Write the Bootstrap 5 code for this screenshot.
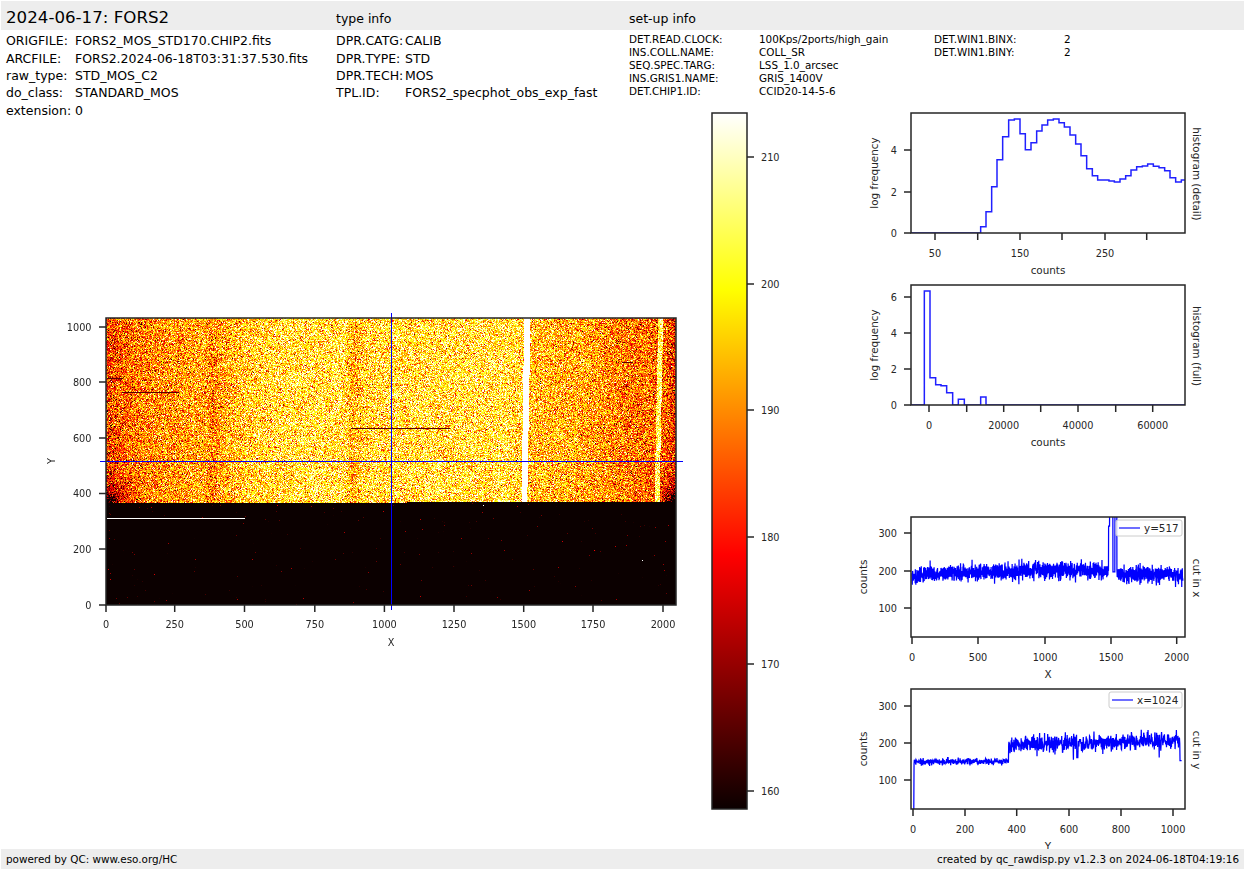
<!DOCTYPE html>
<html lang="en">
<head>
  <meta charset="UTF-8" />
  <title>2024-06-17: FORS2</title>
  <link href="https://cdn.jsdelivr.net/npm/bootstrap@5.3.3/dist/css/bootstrap.min.css" rel="stylesheet">
  <style>
    body {
      background: #fff;
      color: #000;
      font-family: "DejaVu Sans", sans-serif;
      font-size: 12.5px;
      overflow: hidden;
    }
    .bar { background: #ededed; margin: 1px 1px 0; height: 29px; padding-top: 4px; }
    .bar .title { font-size: 16.67px; width: 335px; padding-left: 5px; margin-top: -1px; }
    .bar .mid { width: 293px; padding-top: 3px; }
    .bar .last { padding-top: 3px; }
    .cell-a { width: 336px; padding-left: 6px; }
    .cell-b { width: 293px; }
    .cell-c { width: 305px; }
    .info { height: 78px; padding-top: 2.4px; line-height: 17.3px; }
    .info span { white-space: nowrap; }
    .lab-a { display: inline-block; width: 69px; }
    .small-rows { font-size: 10.4px; line-height: 13px; padding-top: 1px; }
    .lab-c { display: inline-block; width: 130px; }
    .img-plot { width: 700px; height: 380px; }
    .img-plot canvas { left: 106px; top: 47px; }
    .img-plot svg { position: relative; display: block; }
    .cbar { display: block; }
    .main { height: 741px; }
    .gap-cut { margin-top: 60px; }
    .plot { height: 172px; }
    .plot svg { display: block; overflow: visible; }
    .plot-last { height: 165px; }
    .foot { background: #ededed; margin: 0 1px; height: 20px; padding: 2px 5px 0; font-size: 10.4px; }
    svg text { font-family: "DejaVu Sans", sans-serif; font-size: 9.72px; fill: #262626; }
    svg text.lab { font-size: 10.4px; }
  </style>
</head>
<body>

<!-- header -->
<div class="bar d-flex align-items-center">
  <div class="title">2024-06-17: FORS2</div>
  <div class="mid">type info</div>
  <div class="last">set-up info</div>
</div>

<div class="info d-flex">
  <div class="cell-a">
    <div><span class="lab-a">ORIGFILE:</span><span>FORS2_MOS_STD170.CHIP2.fits</span></div>
    <div><span class="lab-a">ARCFILE:</span><span>FORS2.2024-06-18T03:31:37.530.fits</span></div>
    <div><span class="lab-a">raw_type:</span><span>STD_MOS_C2</span></div>
    <div><span class="lab-a">do_class:</span><span>STANDARD_MOS</span></div>
    <div><span class="lab-a">extension:</span><span>0</span></div>
  </div>
  <div class="cell-b">
    <div><span class="lab-a">DPR.CATG:</span><span>CALIB</span></div>
    <div><span class="lab-a">DPR.TYPE:</span><span>STD</span></div>
    <div><span class="lab-a">DPR.TECH:</span><span>MOS</span></div>
    <div><span class="lab-a">TPL.ID:</span><span>FORS2_specphot_obs_exp_fast</span></div>
  </div>
  <div class="cell-c small-rows">
    <div><span class="lab-c">DET.READ.CLOCK:</span><span>100Kps/2ports/high_gain</span></div>
    <div><span class="lab-c">INS.COLL.NAME:</span><span>COLL_SR</span></div>
    <div><span class="lab-c">SEQ.SPEC.TARG:</span><span>LSS_1.0_arcsec</span></div>
    <div><span class="lab-c">INS.GRIS1.NAME:</span><span>GRIS_1400V</span></div>
    <div><span class="lab-c">DET.CHIP1.ID:</span><span>CCID20-14-5-6</span></div>
  </div>
  <div class="small-rows">
    <div><span class="lab-c">DET.WIN1.BINX:</span><span>2</span></div>
    <div><span class="lab-c">DET.WIN1.BINY:</span><span>2</span></div>
  </div>
</div>

<!-- plots -->
<div class="main d-flex align-items-start">
  <div class="d-flex align-items-center">
    <div class="img-plot position-relative">
      <canvas id="frame" class="position-absolute" width="570" height="287"></canvas>
      <svg id="imgAxes" width="700" height="380"></svg>
    </div>
    <svg class="cbar" width="150" height="706">
      <defs>
        <linearGradient id="hot" x1="0" y1="1" x2="0" y2="0">
          <stop offset="0" stop-color="#0b0000"/>
          <stop offset="0.365" stop-color="#ff0000"/>
          <stop offset="0.746" stop-color="#ffff00"/>
          <stop offset="1" stop-color="#ffffff"/>
        </linearGradient>
      </defs>
      <rect x="12" y="5" width="35" height="696" fill="url(#hot)" stroke="#262626" stroke-width="1.5"/>
      <g stroke="#262626" stroke-width="1.5">
        <line x1="47" x2="54" y1="49" y2="49"/>
        <line x1="47" x2="54" y1="176" y2="176"/>
        <line x1="47" x2="54" y1="302" y2="302"/>
        <line x1="47" x2="54" y1="429" y2="429"/>
        <line x1="47" x2="54" y1="556" y2="556"/>
        <line x1="47" x2="54" y1="683" y2="683"/>
      </g>
      <text x="61" y="52.5">210</text>
      <text x="61" y="179.5">200</text>
      <text x="61" y="305.5">190</text>
      <text x="61" y="432.5">180</text>
      <text x="61" y="559.5">170</text>
      <text x="61" y="686.5">160</text>
    </svg>
  </div>
  <div class="d-flex flex-column">
    <div class="plot" id="histDetail"></div>
    <div class="plot" id="histFull"></div>
    <div class="plot gap-cut" id="cutX"></div>
    <div class="plot plot-last" id="cutY"></div>
  </div>
</div>

<div class="foot d-flex justify-content-between align-items-center position-relative">
  <span>powered by QC: www.eso.org/HC</span>
  <span>created by qc_rawdisp.py v1.2.3 on 2024-06-18T04:19:16</span>
</div>

<script src="https://cdn.jsdelivr.net/npm/bootstrap@5.3.3/dist/js/bootstrap.bundle.min.js"></script>
<script>
  // seeded noise so every render is the same
  let seed = 20240617;
  function rnd() {
    seed = (seed + 0x6D2B79F5) | 0;
    let t = Math.imul(seed ^ (seed >>> 15), 1 | seed);
    t = (t + Math.imul(t ^ (t >>> 7), 61 | t)) ^ t;
    return ((t ^ (t >>> 14)) >>> 0) / 4294967296;
  }
  function gauss() {
    return Math.sqrt(-2 * Math.log(rnd() + 1e-9)) * Math.cos(6.2832 * rnd());
  }
  function interp(pts, x) {
    for (let i = 1; i < pts.length; i++) {
      if (x <= pts[i][0]) {
        const a = pts[i - 1], b = pts[i];
        return a[1] + (b[1] - a[1]) * (x - a[0]) / (b[0] - a[0]);
      }
    }
    return pts[pts.length - 1][1];
  }
  const clamp = v => Math.max(0, Math.min(1, v));

  // --- detector image, drawn in canvas pixels ---
  const profile = [[0,182],[12,186],[40,190],[85,193],[100,193],[106,189],[113,193],[140,198],[170,200],
    [238,201],[245,194],[252,196],[262,200],[400,201],[426,196],[445,195],[480,194],[520,189],[545,188],
    [560,185],[570,180]];
  function drawFrame() {
    const ctx = document.getElementById('frame').getContext('2d');
    const img = ctx.createImageData(570, 287);
    for (let y = 0; y < 287; y++) {
      const u = (185 - y) / 185;
      for (let x = 0; x < 570; x++) {
        let v;
        if (y >= 185 + (x > 300 ? -1 : 0)) {
          v = 148;
          if (rnd() < 0.0035) v = 159 + rnd() * rnd() * 20;
        } else {
          v = interp(profile, x) + gauss() * 10;
          const dl = Math.hypot(x, 185 - y), dr = Math.hypot(570 - x, 185 - y);
          v -= 45 * Math.exp(-dl / 10) + 45 * Math.exp(-dr / 10);
          // bright slits
          if (x >= 415 + u * 2.7 && x < 420.7 + u * 3.3) v = 260;
          if (x >= 548 + u * 3.7 && x < 553 + u * 3.7) v = 205 + gauss() * 8;
        }
        const t = clamp((v - 158.6) / 54.9);
        const i = (y * 570 + x) * 4;
        img.data[i] = 255 * Math.min(1, 0.0416 + t / 0.365 * 0.9584);
        img.data[i + 1] = 255 * clamp((t - 0.365) / 0.381);
        img.data[i + 2] = 255 * clamp((t - 0.746) / 0.254);
        img.data[i + 3] = 255;
      }
    }
    ctx.putImageData(img, 0, 0);
    // bad columns and hot pixels
    ctx.fillStyle = '#5a0000';
    ctx.fillRect(1, 60, 16, 1);
    ctx.fillRect(16, 74, 57, 1);
    ctx.fillRect(245, 110, 99, 1);
    ctx.fillRect(516, 44, 11, 1);
    ctx.fillStyle = '#fff';
    ctx.fillRect(1, 200, 138, 1);
    ctx.fillRect(377, 187, 1, 1);
    ctx.fillRect(536, 242, 1, 1);
  }

  // --- axes helpers ---
  const SPINE = '#262626';
  function tickMarks(list, horiz, at, dir) {
    return list.map(p => horiz
      ? `<line x1="${p}" x2="${p}" y1="${at}" y2="${at + dir}" stroke="${SPINE}" stroke-width="1.5"/>`
      : `<line x1="${at}" x2="${at - dir}" y1="${p}" y2="${p}" stroke="${SPINE}" stroke-width="1.5"/>`).join('');
  }
  function makePlot(id, o) {
    const L = 61, R = 335, T = 5, B = 125;
    let s = `<svg width="395" height="172"><defs><clipPath id="${id}Clip"><rect x="${L}" y="${T}" width="${R - L}" height="${B - T}"/></clipPath></defs>`;
    s += `<g clip-path="url(#${id}Clip)">${o.line}</g>`;
    s += `<rect x="${L}" y="${T}" width="${R - L}" height="${B - T}" fill="none" stroke="${SPINE}" stroke-width="1.5"/>`;
    s += tickMarks(o.xt.map(t => t[0]), true, B, 7);
    s += tickMarks(o.yt.map(t => t[0]), false, L, 7);
    o.xt.forEach(t => { if (t[1]) s += `<text x="${t[0]}" y="${B + 24}" text-anchor="middle">${t[1]}</text>`; });
    o.yt.forEach(t => { s += `<text x="47" y="${t[0] + 3.5}" text-anchor="end">${t[1]}</text>`; });
    s += `<text class="lab" x="198" y="${B + 41}" text-anchor="middle">${o.xlabel}</text>`;
    s += `<text class="lab" transform="translate(${o.ylabelX} 65) rotate(-90)" text-anchor="middle">${o.ylabel}</text>`;
    s += `<text class="lab" transform="translate(343 66) rotate(90)" text-anchor="middle">${o.side}</text>`;
    if (o.legend) {
      const g = o.legend;
      s += `<rect x="${g.x}" y="${g.y}" width="${g.w}" height="16" rx="2" fill="#fff" fill-opacity=".8" stroke="#ccc"/>`;
      s += `<line x1="${g.x + 3}" x2="${g.x + 24}" y1="${g.y + 8}" y2="${g.y + 8}" stroke="#2020ff" stroke-width="1.3"/>`;
      s += `<text class="lab" x="${g.x + 28}" y="${g.y + 11.5}">${g.text}</text>`;
    }
    document.getElementById(id).innerHTML = s + '</svg>';
  }
  // bins are [x start, level] in plot pixels
  function stepLine(bins, base, end) {
    let pts = `${bins[0][0]},${base} `;
    bins.forEach((b, i) => {
      const next = i + 1 < bins.length ? bins[i + 1][0] : end;
      pts += `${b[0]},${b[1]} ${next},${b[1]} `;
    });
    return `<polyline points="${pts}" fill="none" stroke="#2020ff" stroke-width="1.5"/>`;
  }
  const cutLine = pts => `<polyline points="${pts.join(' ')}" fill="none" stroke="#0000ff" stroke-width="1.25"/>`;
  const vY = v => 5 + (344.5 - v) * 0.3675;

  // histogram (detail)
  const detail = [[392,365],[408,320],[425,245],[441,164],[458,95],[476,45],[493,42],[510,86],[526,134],[543,113],
    [560,78],[576,60],[593,45],[610,42],[627,53],[643,66],[660,90],[677,117],[693,152],[710,191],[727,212],
    [743,225],[760,225],[777,228],[793,231],[810,222],[827,212],[843,195],[860,185],[877,183],[893,177],
    [910,184],[927,188],[944,197],[960,218],[977,231],[994,225]].map(p => [p[0] / 3, p[1] / 3 - 3]);
  makePlot('histDetail', {
    line: `<line x1="61" x2="131" y1="125" y2="125" stroke="#2020ff" stroke-width="1.5"/>` + stepLine(detail, 125, 335),
    xt: [[85,'50'],[127.7,''],[170,'150'],[212,''],[255,'250'],[296.7,'']],
    yt: [[125,'0'],[84,'2'],[42,'4']],
    xlabel: 'counts', ylabel: 'log frequency', ylabelX: 28, side: 'histogram (detail)'
  });

  // histogram (full)
  const full = [[223,33],[240,293],[257,314],[273,317],[290,338],[308,375],[325,358],[343,375],[392,351],[408,375]]
    .map(p => [p[0] / 3, p[1] / 3]);
  makePlot('histFull', {
    line: `<line x1="61" x2="75" y1="125" y2="125" stroke="#2020ff" stroke-width="1.5"/>` + stepLine(full, 125, 335),
    xt: [[79,'0'],[116.7,''],[153.7,'20000'],[190.7,''],[228,'40000'],[265.7,''],[302.7,'60000']],
    yt: [[125,'0'],[89,'2'],[53,'4'],[17,'6']],
    xlabel: 'counts', ylabel: 'log frequency', ylabelX: 28, side: 'histogram (full)'
  });

  // cut along x
  const xBase = [[0,184],[300,191],[1000,199],[1400,199],[1560,190],[2048,186]];
  const xPts = [];
  for (let x = 0; x < 2048; x += 1) {
    let v = interp(xBase, x) + gauss() * 11;
    if (rnd() < 0.006) v += 20;
    if (Math.abs(x - 930) < 6) v += 14;
    if (x >= 1486 && x < 1494) v = 320;
    else if (x >= 1494 && x < 1519) v = 380;
    else if (x >= 1519 && x < 1534) v = 195;
    else if (x >= 1534 && x < 1549) v = 380;
    xPts.push((62 + x * 0.1323).toFixed(2) + ',' + vY(v).toFixed(1));
  }
  makePlot('cutX', {
    line: cutLine(xPts),
    xt: [[62,'0'],[128,'500'],[195,'1000'],[261,'1500'],[326.7,'2000']],
    yt: [[21,'300'],[59,'200'],[96,'100']],
    xlabel: 'X', ylabel: 'counts', ylabelX: 16.5, side: 'cut in x',
    legend: { x: 266, y: 8, w: 66, text: 'y=517' }
  });

  // cut along y
  const yPts = [];
  for (let y = 0; y < 1034; y++) {
    let v;
    if (y < 4) v = 10;
    else if (y < 368) v = 147 + gauss() * 4.5;
    else if (y < 1027) v = 192 + (y - 368) * 0.02 + gauss() * 12;
    else v = 150;
    if (Math.abs(y - 632) < 3) v = 158;
    if (Math.abs(y - 134) < 2) v = 158;
    yPts.push((63 + y * 0.26).toFixed(2) + ',' + vY(v).toFixed(1));
  }
  makePlot('cutY', {
    line: cutLine(yPts),
    xt: [[63,'0'],[115,'200'],[166.7,'400'],[219,'600'],[271,'800'],[323,'1000']],
    yt: [[22,'300'],[59,'200'],[96,'100']],
    xlabel: 'Y', ylabel: 'counts', ylabelX: 16.5, side: 'cut in y',
    legend: { x: 259, y: 8, w: 73, text: 'x=1024' }
  });

  // axes of the image, drawn over the canvas (svg top is y=271 on the page)
  function imageAxes() {
    const xs = [[106,'0'],[174.7,'250'],[244.5,'500'],[314.8,'750'],[384.4,'1000'],[454,'1250'],[523.7,'1500'],[593,'1750'],[663,'2000']];
    const ys = [[334,'0'],[278,'200'],[222.5,'400'],[167,'600'],[111,'800'],[56,'1000']];
    let s = `<line x1="100" x2="683" y1="190.5" y2="190.5" stroke="#0000ff"/>`;
    s += `<line x1="391.5" x2="391.5" y1="42" y2="339" stroke="#0000ff"/>`;
    s += `<rect x="106" y="47" width="570" height="287" fill="none" stroke="${SPINE}" stroke-width="1.5"/>`;
    s += tickMarks(xs.map(t => t[0]), true, 334, 7);
    s += tickMarks(ys.map(t => t[0]), false, 106, 7);
    xs.forEach(t => { s += `<text x="${t[0]}" y="356.5" text-anchor="middle">${t[1]}</text>`; });
    ys.forEach(t => { s += `<text x="91.5" y="${t[0] + 3.5}" text-anchor="end">${t[1]}</text>`; });
    s += `<text x="391" y="375" text-anchor="middle">X</text>`;
    s += `<text transform="translate(55 190) rotate(-90)" text-anchor="middle">Y</text>`;
    document.getElementById('imgAxes').innerHTML = s;
  }

  drawFrame();
  imageAxes();
</script>
</body>
</html>
